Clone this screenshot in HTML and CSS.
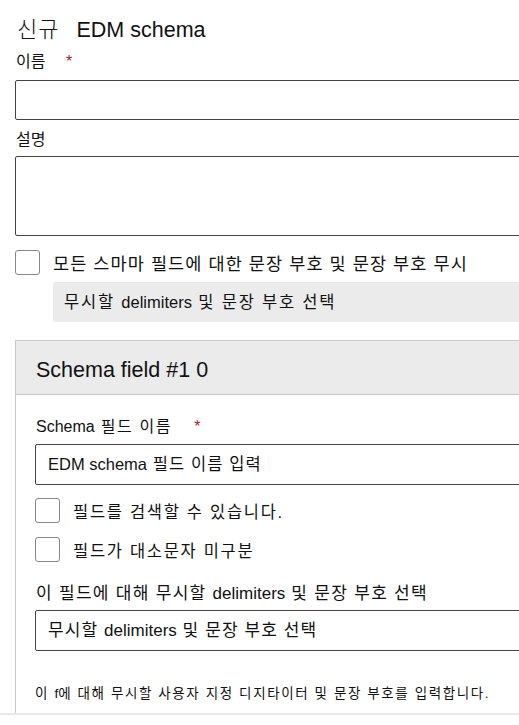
FILE: index.html
```html
<!DOCTYPE html>
<html lang="ko">
<head>
<meta charset="utf-8">
<link rel="stylesheet" href="styles.css">
<title>EDM schema</title>
</head>
<body>
<div class="page">
  <h1 class="title"><span class="title-ko">신규</span><span class="title-en">EDM schema</span></h1>

  <div class="label">이름 <span class="req">*</span></div>
  <div class="input"></div>

  <div class="label label-desc">설명</div>
  <div class="input textarea"></div>

  <div class="check-row top-check">
    <span class="checkbox"></span>
    <span class="check-text big">모든 스마마 필드에 대한 문장 부호 및 문장 부호 무시</span>
  </div>
  <div class="gray-select">무시할 <span class="lat">delimiters</span> 및 문장 부호 선택</div>

  <section class="panel">
    <div class="panel-head">Schema field #1 0</div>
    <div class="panel-body">
      <div class="label field-label"><span class="lat">Schema</span> 필드 이름 <span class="req">*</span></div>
      <div class="input field-input name-input"><span class="lat">EDM schema</span> 필드 이름 입력</div>

      <div class="check-row c1">
        <span class="checkbox"></span>
        <span class="check-text">필드를 검색할 수 있습니다.</span>
      </div>
      <div class="check-row c2">
        <span class="checkbox"></span>
        <span class="check-text">필드가 대소문자 미구분</span>
      </div>

      <div class="label delim-label">이 필드에 대해 무시할 <span class="lat">delimiters</span> 및 문장 부호 선택</div>
      <div class="input field-input delim-input">무시할 <span class="lat">delimiters</span> 및 문장 부호 선택</div>

      <div class="small-label">이 <span class="lat">f</span>에 대해 무시할 사용자 지정 디지타이터 및 문장 부호를 입력합니다.</div>
      <div class="input field-input last-input"></div>
    </div>
  </section>
</div>
</body>
</html>
```

FILE: styles.css
```css
* { box-sizing: border-box; }
html, body {
  margin: 0;
  padding: 0;
  background: #fff;
  overflow: hidden;
}
body {
  width: 519px;
  height: 725px;
  font-family: "Liberation Sans", "Noto Sans CJK KR", sans-serif;
  color: #111;
}
.lat { letter-spacing: 0; }
.page {
  height: 715px;
  overflow: hidden;
  padding-left: 15px;
  border-bottom: 2px solid #e8e8e8;
}
.title {
  margin: 18px 0 0 2px;
  font-weight: normal;
  font-size: 21.5px;
  line-height: 24px;
  display: flex;
  align-items: baseline;
  gap: 17px;
}
.title-ko {
  font-size: 22px;
  letter-spacing: 1px;
  font-weight: 300;
}
.label {
  font-size: 16px;
  line-height: 20px;
  margin-top: 10px;
  padding-left: 1px;
}
.req {
  color: #a4262c;
  margin-left: 16px;
}
.input {
  margin-top: 8px;
  height: 40px;
  width: 530px;
  border: 1px solid #444;
  border-radius: 2px;
  background: #fff;
}
.label-desc { margin-top: 10px; }
.textarea {
  margin-top: 6px;
  height: 80px;
}
.check-row {
  display: flex;
  align-items: center;
  gap: 13px;
}
.top-check { margin-top: 14px; }
.checkbox {
  flex: none;
  width: 25px;
  height: 25px;
  border: 1px solid #8a8886;
  border-radius: 3px;
  background: #fff;
}
.check-text {
  font-size: 16.5px;
  line-height: 20px;
  padding-top: 3px;
  letter-spacing: 1.7px;
}
.check-text.big {
  font-size: 17.5px;
  letter-spacing: 1.1px;
}
.gray-select {
  margin: 7px 0 0 38px;
  height: 40px;
  width: 500px;
  background: #ebebeb;
  border-radius: 2px;
  padding-left: 11px;
  font-size: 16.5px;
  line-height: 40px;
  letter-spacing: 1.8px;
}
.panel {
  margin-top: 18px;
  width: 540px;
  border: 1px solid #c8c8c8;
  border-bottom: none;
  border-right: none;
  height: 400px;
}
.panel-head {
  height: 54px;
  background: #ebebeb;
  border-bottom: 1px solid #c8c8c8;
  padding-left: 20px;
  font-size: 21.5px;
  line-height: 58px;
}
.panel-body {
  padding-left: 19px;
}
.field-label {
  margin-top: 22px;
  letter-spacing: 1.6px;
}
.field-input {
  margin-top: 7px;
  padding-left: 12px;
  font-size: 16.5px;
  line-height: 39px;
  height: 41px;
}
.name-input { letter-spacing: 1.1px; }
.c1 { margin-top: 13px; }
.c2 { margin-top: 14px; }
.delim-label {
  margin-top: 22px;
  font-size: 17px;
  letter-spacing: 1.3px;
}
.delim-input {
  margin-top: 6px;
  font-size: 17px;
  letter-spacing: 1.1px;
}
.small-label {
  margin-top: 34px;
  font-size: 13.5px;
  line-height: 18px;
  letter-spacing: 1.6px;
}
.last-input {
  margin-top: 10px;
}
```
